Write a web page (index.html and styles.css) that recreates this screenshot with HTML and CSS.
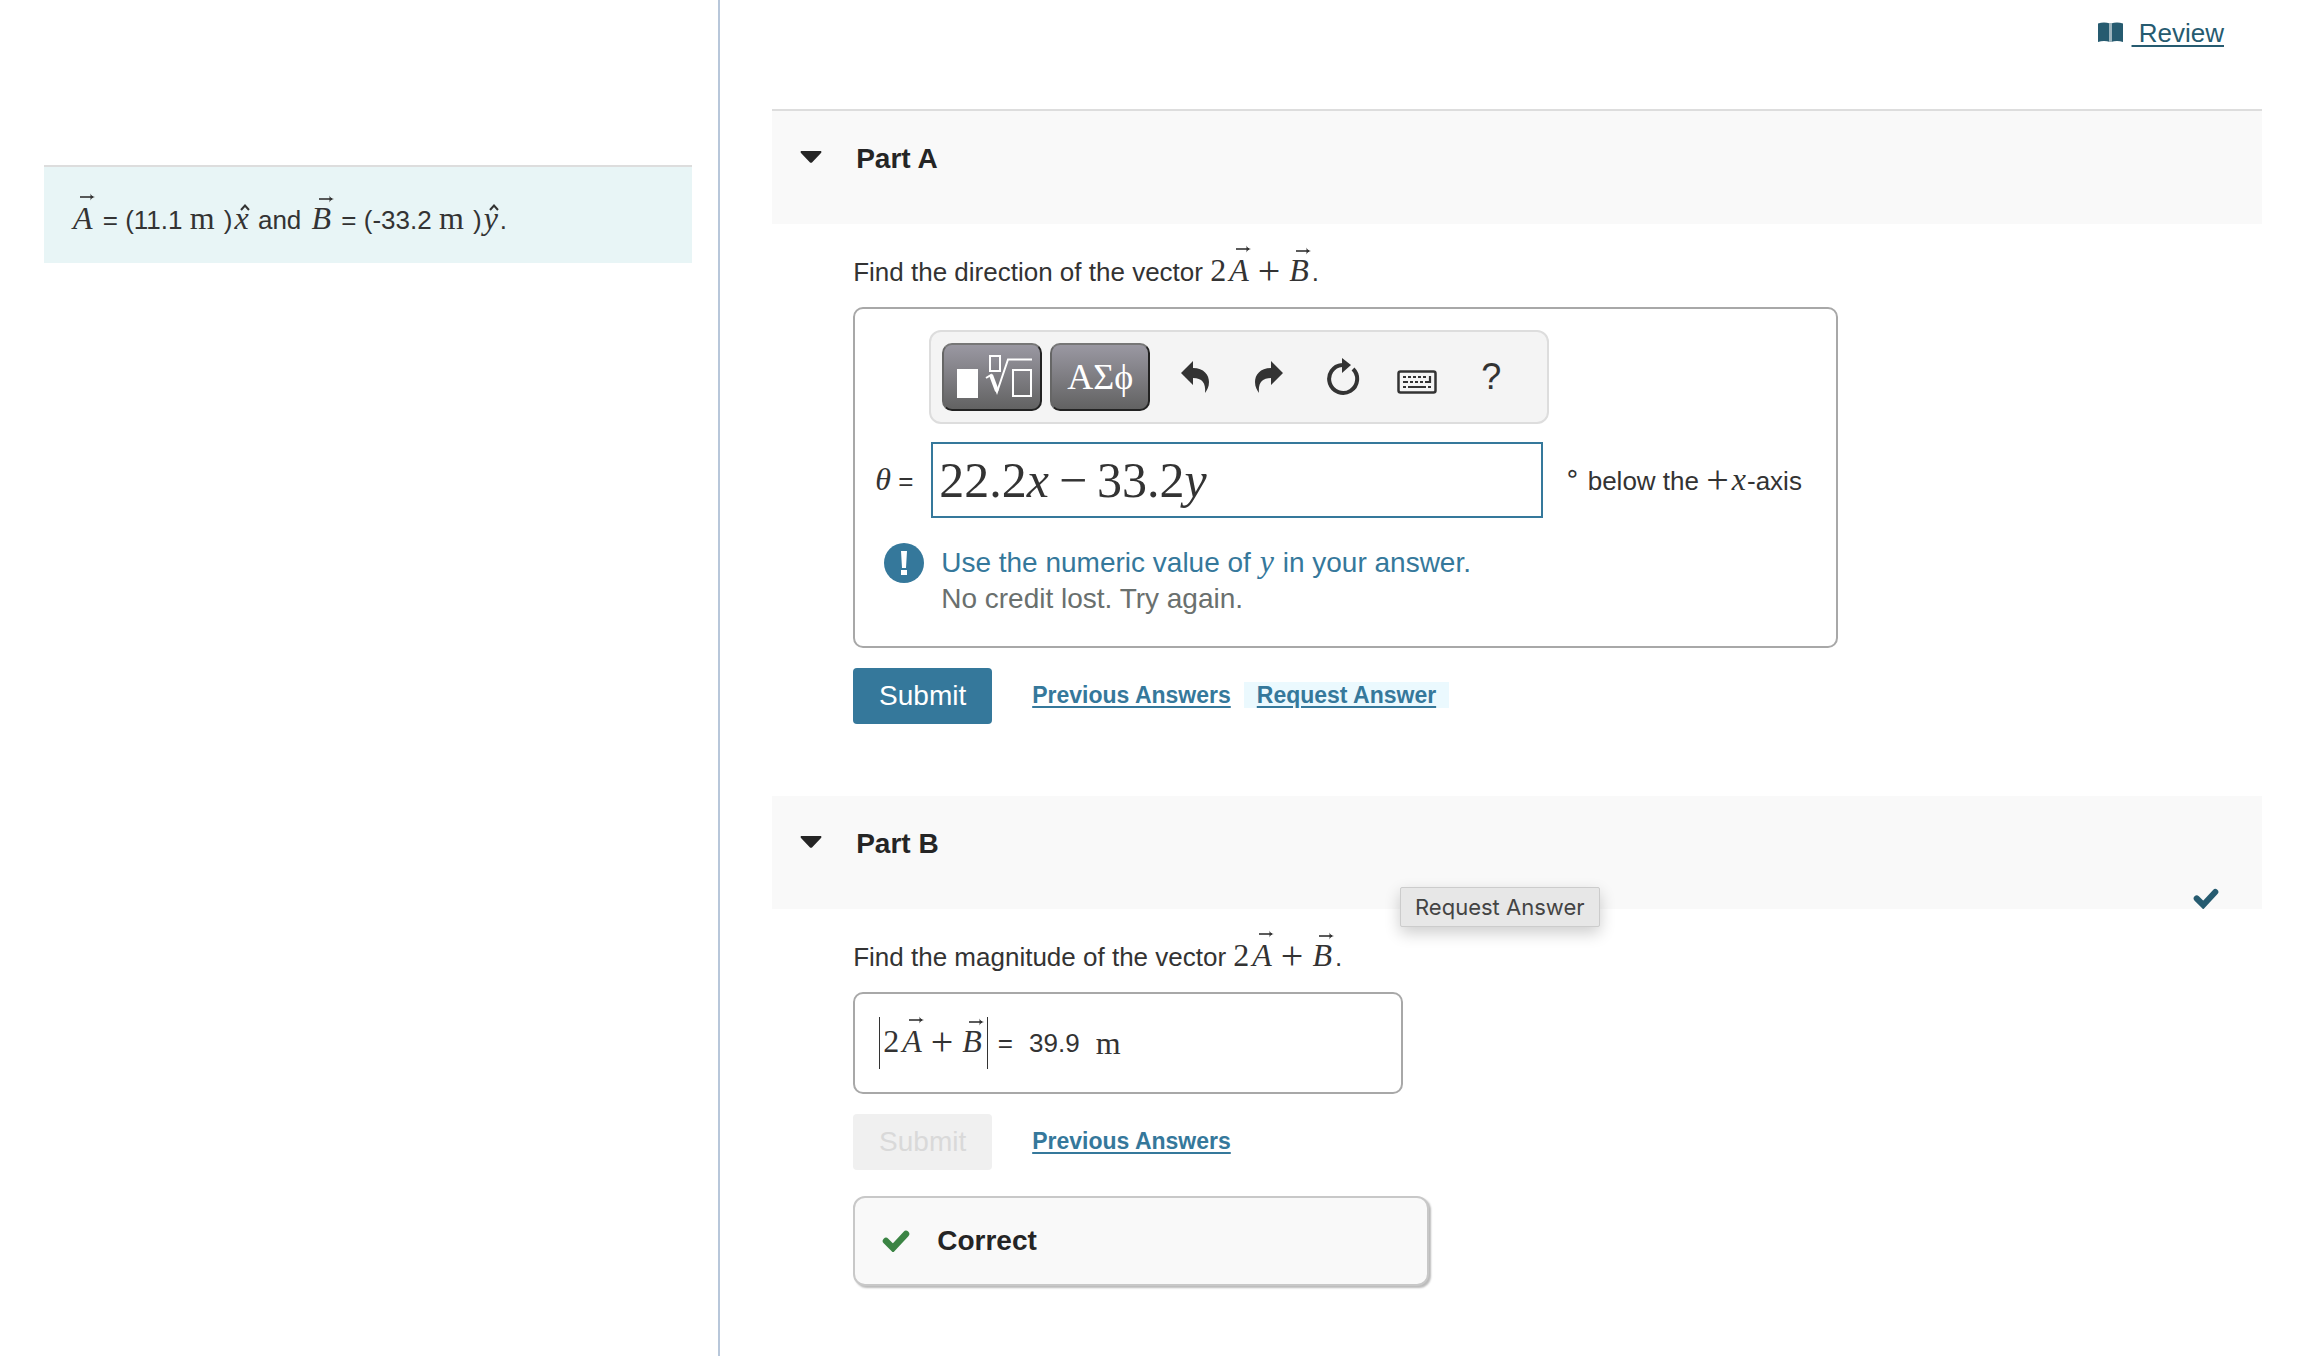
FILE: index.html
```html
<!DOCTYPE html>
<html lang="en">
<head>
    <meta charset="UTF-8">
    <meta name="viewport" content="width=device-width, initial-scale=1.0">
    <title>Vector Addition</title>
    <link rel="stylesheet" href="styles.css">
</head>
<body>

    <!-- Shared shapes -->
    <svg class="sprite" aria-hidden="true">
        <symbol id="arrow" viewBox="0 0 15 8">
            <path d="M0 4H13" stroke="currentColor" stroke-width="1.6" fill="none"/>
            <path d="M10.5 0.5C11 2.5 12.5 3.5 15 4C12.5 4.5 11 5.5 10.5 7.5Z" fill="currentColor"/>
        </symbol>
        <symbol id="hat" viewBox="0 0 10 7">
            <path d="M1 6L5 1.5L9 6" stroke="currentColor" stroke-width="2" fill="none"/>
        </symbol>
        <symbol id="check" viewBox="0 0 28 22">
            <path d="M4 11L11 18L24 4" stroke="currentColor" stroke-width="6.5" stroke-linecap="round" fill="none"/>
        </symbol>
    </svg>

    <aside class="problem">
        <p class="given">
            <span class="vec tall">A<svg><use href="#arrow"/></svg></span> = (11.1 <span class="unit">m</span> )<span class="hat">x<svg><use href="#hat"/></svg></span> and
            <span class="vec">B<svg><use href="#arrow"/></svg></span> = (-33.2 <span class="unit">m</span> )<span class="hat">y<svg><use href="#hat"/></svg></span>.
        </p>
    </aside>

    <main class="parts">
        <div class="review-bar">
            <svg class="book" viewBox="0 0 25 21" aria-hidden="true">
                <path d="M0 1.5Q6 -0.5 12 1.5V20Q6 18 0 20Z" fill="#265b70"/>
                <path d="M25 1.5Q19 -0.5 13 1.5V20Q19 18 25 20Z" fill="#265b70"/>
                <path d="M12.5 1V20" stroke="#9db4bd" stroke-width="3"/>
            </svg>
            <a href="#" class="review">&nbsp;Review</a>
        </div>

        <section class="part">
            <header class="part-header first">
                <svg class="caret" viewBox="0 0 22 12" aria-hidden="true"><path d="M1 0H21Q22 1 21 2L12 11.5Q11 12 10 11.5L1 2Q0 1 1 0Z" fill="#252525"/></svg>
                <h2>Part A</h2>
            </header>
            <div class="part-body">
                <p class="question">Find the direction of the vector <span class="num">2</span><span class="vec tall">A<svg><use href="#arrow"/></svg></span><span class="op">+</span><span class="vec">B<svg><use href="#arrow"/></svg></span>.</p>

                <form class="answer">
                    <div class="toolbar">
                        <button type="button" class="palette" aria-label="Templates">
                            <svg width="96" height="64" viewBox="0 0 96 64" fill="none" stroke="#fff">
                                <path d="M13 24H34V53H13Z" fill="#fff" stroke="none"/>
                                <path d="M46 11H56V26H46Z" stroke-width="2"/>
                                <path d="M42 33L47 30L53 47L64 14.5H88" stroke-width="2"/>
                                <path d="M47 30L53 46" stroke-width="4"/>
                                <path d="M69 25H87V51H69Z" stroke-width="2"/>
                            </svg>
                        </button>
                        <button type="button" class="palette">ΑΣϕ</button>
                        <button type="button" class="tool" aria-label="Undo">
                            <svg width="28" height="32" viewBox="0 0 28 32"><path d="M0 12L12 0V7C23 7 28 14 28 21C28 26 26 29 24 32C25 22 21 17 12 17V24Z" fill="#333"/></svg>
                        </button>
                        <button type="button" class="tool" aria-label="Redo">
                            <svg width="28" height="32" viewBox="0 0 28 32"><path d="M28 12L16 0V7C5 7 0 14 0 21C0 26 2 29 4 32C3 22 7 17 16 17V24Z" fill="#333"/></svg>
                        </button>
                        <button type="button" class="tool" aria-label="Reset">
                            <svg width="34" height="38" viewBox="0 0 34 38"><path d="M27 11A14 14 0 1 1 16 7" stroke="#333" stroke-width="4" fill="none"/><path d="M16 0L25 7L16 15Z" fill="#333"/></svg>
                        </button>
                        <button type="button" class="tool low" aria-label="Keyboard shortcuts">
                            <svg width="40" height="24" viewBox="0 0 40 24"><rect x="1.5" y="1.5" width="37" height="21" rx="2" stroke="#333" stroke-width="2.5" fill="none"/><path d="M6 7H9M11 7H14M16 7H19M21 7H24M26 7H29M6 12H11M13 12H16M18 12H21M23 12H26M28 12H34M33 6V13M6 17H9M11 17H29M31 17H34" stroke="#333" stroke-width="2.2"/></svg>
                        </button>
                        <button type="button" class="tool" aria-label="Help">?</button>
                    </div>

                    <div class="entry">
                        <label for="theta"><i class="num">θ</i> =</label>
                        <div class="math-field">
                            <input type="text" id="theta" autocomplete="off">
                            <span class="math-value">22.2<i>x</i><span class="minus">−</span>33.2<i>y</i></span>
                        </div>
                        <span class="units"><span class="degree">∘</span> below the <span class="op tight">+</span><span class="var">x</span>-axis</span>
                    </div>

                    <div class="feedback">
                        <svg width="40" height="40" viewBox="0 0 40 40" aria-hidden="true">
                            <circle cx="20" cy="20" r="20" fill="#35789b"/>
                            <path d="M17 8H23L22 25H18Z M17 27H23V32H17Z" fill="#fff"/>
                        </svg>
                        <p>Use the numeric value of <span class="var">y</span> in your answer.<br><span class="muted">No credit lost. Try again.</span></p>
                    </div>
                </form>

                <div class="actions">
                    <button type="submit" class="submit">Submit</button>
                    <a href="#" class="link">Previous Answers</a>
                    <a href="#" class="link hovered">Request Answer<span class="tooltip">Request Answer</span></a>
                </div>
            </div>
        </section>

        <section class="part">
            <header class="part-header">
                <svg class="caret" viewBox="0 0 22 12" aria-hidden="true"><path d="M1 0H21Q22 1 21 2L12 11.5Q11 12 10 11.5L1 2Q0 1 1 0Z" fill="#252525"/></svg>
                <h2>Part B</h2>
                <svg class="done"><use href="#check"/></svg>
            </header>
            <div class="part-body">
                <p class="question">Find the magnitude of the vector <span class="num">2</span><span class="vec tall">A<svg><use href="#arrow"/></svg></span><span class="op">+</span><span class="vec">B<svg><use href="#arrow"/></svg></span>.</p>

                <div class="answer result">
                    <span class="magnitude"><span class="num">2</span><span class="vec tall">A<svg><use href="#arrow"/></svg></span><span class="op">+</span><span class="vec">B<svg><use href="#arrow"/></svg></span></span>
                    <span>=</span>
                    <span class="value">39.9</span>
                    <span class="unit">m</span>
                </div>

                <div class="actions">
                    <button type="submit" class="submit" disabled>Submit</button>
                    <a href="#" class="link">Previous Answers</a>
                </div>

                <div class="correct">
                    <svg class="tick"><use href="#check"/></svg>
                    <strong>Correct</strong>
                </div>
            </div>
        </section>
    </main>

</body>
</html>
```
FILE: styles.css
```css
* {
    box-sizing: border-box;
}

body {
    display: flex;
    min-height: 100vh;
    margin: 0;
    font-family: "Liberation Sans", Arial, sans-serif;
    font-size: 26px;
    line-height: 36px;
    color: #333;
    background-color: #fff;
}

p, h2 {
    margin: 0;
}

button {
    font-family: inherit;
    cursor: pointer;
}

svg {
    flex-shrink: 0;
}

.sprite {
    position: absolute;
    width: 0;
    height: 0;
}

/* Left column */
.problem {
    flex: 0 0 31.15%;
    padding: 165px 26px 0 44px;
    border-right: 2px solid #b8c7da;
}

.given {
    padding: 33px 26px 25px;
    border-top: 2px solid #ddd;
    background-color: #e8f5f6;
}

/* Math */
.vec, .hat, .var, .unit, .num, .op {
    font-family: "Liberation Serif", "Times New Roman", serif;
    font-size: 32px;
    line-height: 36px;
}

.vec, .hat, .var {
    font-style: italic;
}

.vec, .hat {
    display: inline-block;
    position: relative;
}

.vec {
    padding: 0 3px;
}

.hat {
    padding: 0 2px;
}

.var {
    margin: 0 1px;
}

.unit {
    margin-right: 2px;
}

.vec svg {
    position: absolute;
    top: -5px;
    left: 10px;
    width: 15px;
    height: 8px;
}

.vec.tall svg {
    top: -7px;
}

.hat svg {
    position: absolute;
    top: 4px;
    left: 7px;
    width: 10px;
    height: 7px;
}

.op {
    margin: 0 6px;
    font-size: 40px;
    line-height: 0;
    vertical-align: -3px;
}

.op.tight {
    margin: 0 2px 0 0;
}

/* Right column */
.parts {
    flex: 1;
    padding: 0 50px 40px 52px;
}

.review-bar {
    display: flex;
    justify-content: flex-end;
    align-items: center;
    gap: 9px;
    height: 109px;
    padding: 0 38px 44px 0;
}

.book {
    width: 25px;
    height: 21px;
}

.review {
    color: #265b70;
    text-decoration-thickness: 2px;
    text-underline-offset: 3px;
}

.part-header {
    display: flex;
    align-items: center;
    position: relative;
    height: 113px;
    padding: 0 28px 18px;
    background-color: #f9f9f9;
}

.part-header.first {
    height: 115px;
    border-top: 2px solid #ddd;
}

.part-header h2 {
    margin-left: 34px;
    font-size: 28px;
    color: #252525;
}

.caret {
    width: 22px;
    height: 12px;
    margin-bottom: 3px;
}

.done {
    position: absolute;
    right: 43px;
    bottom: 0;
    width: 26px;
    height: 21px;
    color: #265b70;
}

.part-body {
    padding: 28px 0 72px 81px;
}

.question {
    margin-bottom: 17px;
}

.answer {
    width: 985px;
    max-width: 100%;
    padding: 21px 24px 29px 20px;
    border: 2px solid #a8a8a8;
    border-radius: 10px;
}

.toolbar {
    display: flex;
    align-items: center;
    width: 620px;
    height: 94px;
    margin-left: 54px;
    padding: 0 11px;
    border: 2px solid #ddd;
    border-radius: 12px;
    background-color: #f4f4f4;
}

.palette {
    display: flex;
    align-items: center;
    justify-content: center;
    width: 100px;
    height: 68px;
    margin-right: 8px;
    padding: 0;
    border: 2px solid #222;
    border-top-color: #777;
    border-left-color: #666;
    border-radius: 10px;
    background: linear-gradient(#9a98a2, #626262);
    color: #fff;
    font-family: "Liberation Serif", serif;
    font-size: 36px;
}

.tool {
    display: flex;
    align-items: center;
    justify-content: center;
    width: 74px;
    height: 68px;
    padding: 0;
    border: none;
    background: none;
    color: #333;
    font-size: 36px;
}

.tool.low {
    padding-top: 10px;
}

.entry {
    display: flex;
    align-items: center;
    margin-top: 18px;
}

.entry label {
    width: 56px;
}

.math-field {
    position: relative;
    width: 612px;
}

.math-field input {
    display: block;
    width: 100%;
    height: 76px;
    border: 2px solid #35789b;
    font-size: 50px;
}

.math-value {
    position: absolute;
    top: 10px;
    left: 8px;
    font-family: "Liberation Serif", "Times New Roman", serif;
    font-size: 50px;
    line-height: 56px;
    pointer-events: none;
}

.minus {
    margin: 0 10px;
}

.units {
    margin-left: 21px;
    white-space: nowrap;
}

.degree {
    font-family: "DejaVu Sans", sans-serif;
    line-height: 0;
    vertical-align: 8px;
}

.feedback {
    display: flex;
    gap: 17px;
    margin: 25px 0 0 9px;
    font-size: 28px;
    color: #35789b;
}

.muted {
    color: #6a706e;
}

.actions {
    display: flex;
    align-items: center;
    margin-top: 20px;
}

.submit {
    width: 139px;
    height: 56px;
    margin-right: 27px;
    padding: 0;
    border: none;
    border-radius: 4px;
    background-color: #35789b;
    color: #fff;
    font-size: 28px;
}

.submit:disabled {
    background-color: #f0f0f0;
    color: #d9d9d9;
    cursor: default;
}

.link {
    position: relative;
    margin-bottom: 2px;
    padding: 0 13px;
    font-size: 23px;
    font-weight: bold;
    line-height: 26px;
    color: #35789b;
    text-decoration-thickness: 2px;
    text-underline-offset: 3px;
}

.hovered {
    background-color: #ebf9fe;
}

.tooltip {
    position: absolute;
    top: 205px;
    left: 156px;
    z-index: 1;
    width: 200px;
    border: 1px solid #ccc;
    border-radius: 2px;
    background-color: #e7e7e7;
    box-shadow: 0 6px 16px rgba(0, 0, 0, 0.2);
    color: #444;
    font-family: Inter, sans-serif;
    font-size: 22px;
    font-weight: normal;
    line-height: 38px;
    text-align: center;
    white-space: nowrap;
}

.result {
    display: flex;
    align-items: center;
    width: 550px;
    height: 102px;
    padding: 0 24px;
}

.magnitude {
    margin-right: 10px;
    padding: 6px 2px 8px 3px;
    border: solid #333;
    border-width: 0 1px;
}

.value {
    margin: 0 16px;
}

.correct {
    display: flex;
    align-items: center;
    gap: 27px;
    width: 576px;
    height: 90px;
    margin-top: 26px;
    padding: 0 27px;
    border: 2px solid #c8c8c8;
    border-radius: 12px;
    background-color: #f9f9f9;
    box-shadow: 2px 2px 2px #bbb;
    color: #252525;
    font-size: 28px;
}

.tick {
    width: 28px;
    height: 22px;
    color: #3b8444;
}
```
